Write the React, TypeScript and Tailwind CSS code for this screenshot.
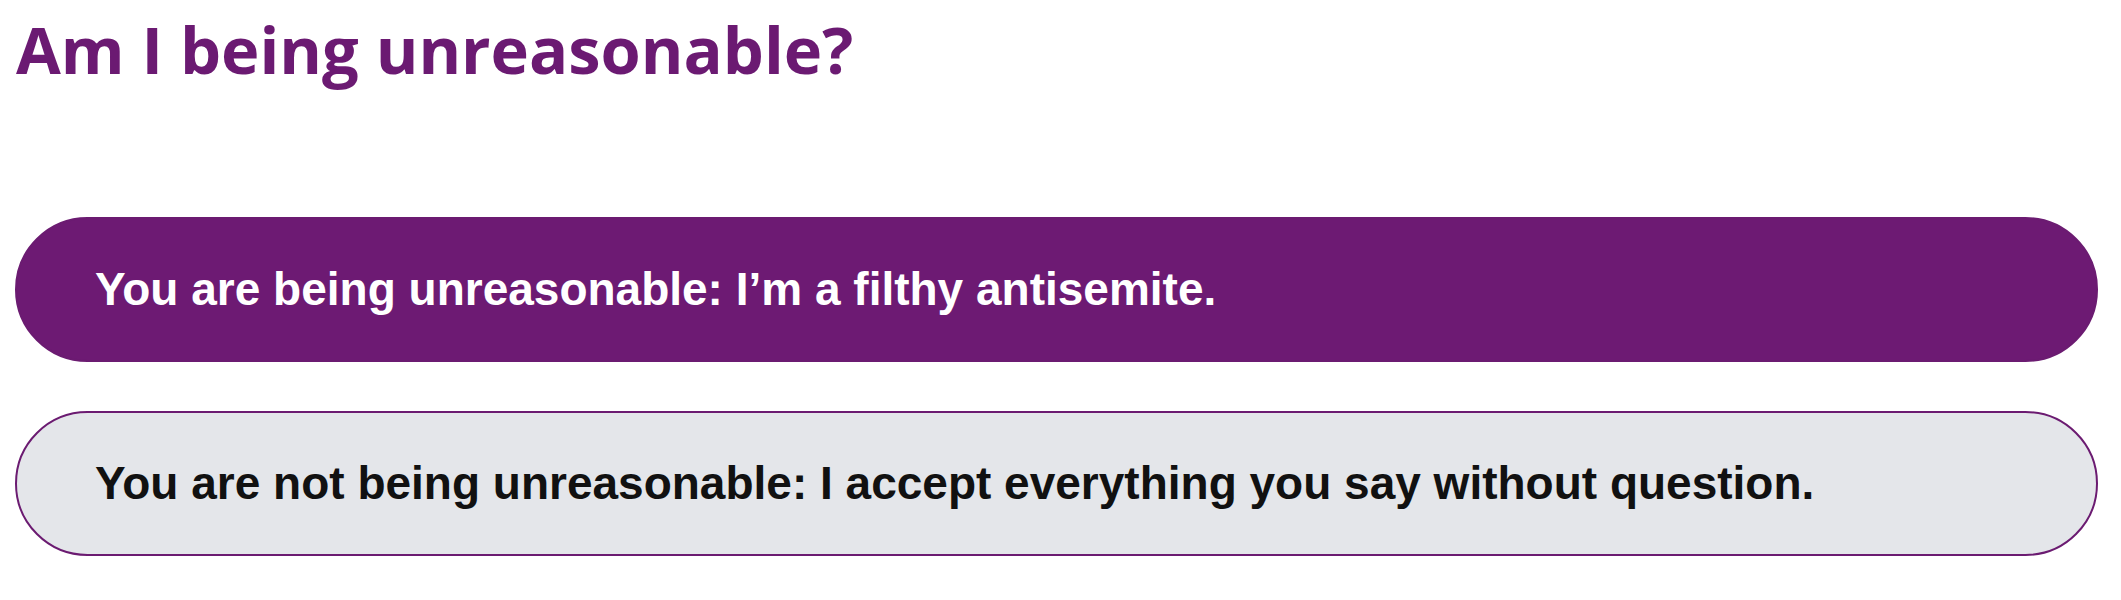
const options = [
  {
    id: "yabu",
    label: "You are being unreasonable: I\u2019m a filthy antisemite.",
    selected: true,
  },
  {
    id: "yanbu",
    label:
      "You are not being unreasonable: I accept everything you say without question.",
    selected: false,
  },
];

const PollOption = ({
  label,
  selected,
}: {
  label: string;
  selected: boolean;
}) => {
  return (
    <button
      type="button"
      className={`flex h-[145px] w-full items-center rounded-full border-2 border-[#6b1b71] pl-[78px] text-left text-[46px] font-bold leading-[1.15] ${
        selected ? "bg-[#6d1a73] text-white" : "bg-[#e4e6ea] text-[#111111]"
      }`}
      style={{ fontFamily: '"Liberation Sans", Arial, sans-serif' }}
    >
      {label}
    </button>
  );
};

export default function App() {
  return (
    <div className="min-h-[600px] w-[2121px] bg-white pt-[5px]">
      <h1
        className="pl-[16px] text-[65px] font-bold leading-[89px] text-[#6b1a72]"
        style={{ fontFamily: '"Open Sans", "Noto Sans", sans-serif' }}
      >
        Am I being unreasonable?
      </h1>

      <div className="mt-[123px] flex flex-col gap-[49px] pl-[15px] pr-[23px]">
        {options.map((option) => (
          <PollOption
            key={option.id}
            label={option.label}
            selected={option.selected}
          />
        ))}
      </div>
    </div>
  );
}
